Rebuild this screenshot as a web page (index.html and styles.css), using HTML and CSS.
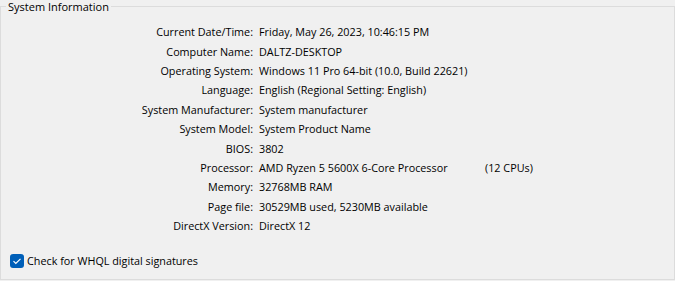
FILE: index.html
```html
<!DOCTYPE html>
<html lang="en">
<head>
    <meta charset="UTF-8">
    <title>System Information</title>
    <link rel="stylesheet" href="styles.css">
</head>
<body>

    <fieldset class="group">
        <legend>System Information</legend>
        <div class="info">
            <div class="row"><span class="label">Current Date/Time:</span><span class="value">Friday, May 26, 2023, 10:46:15 PM</span></div>
            <div class="row"><span class="label">Computer Name:</span><span class="value">DALTZ-DESKTOP</span></div>
            <div class="row"><span class="label">Operating System:</span><span class="value">Windows 11 Pro 64-bit (10.0, Build 22621)</span></div>
            <div class="row"><span class="label">Language:</span><span class="value">English (Regional Setting: English)</span></div>
            <div class="row"><span class="label">System Manufacturer:</span><span class="value">System manufacturer</span></div>
            <div class="row"><span class="label">System Model:</span><span class="value">System Product Name</span></div>
            <div class="row"><span class="label">BIOS:</span><span class="value">3802</span></div>
            <div class="row"><span class="label">Processor:</span><span class="value"><span class="cpu">AMD Ryzen 5 5600X 6-Core Processor</span><span>(12 CPUs)</span></span></div>
            <div class="row"><span class="label">Memory:</span><span class="value">32768MB RAM</span></div>
            <div class="row"><span class="label">Page file:</span><span class="value">30529MB used, 5230MB available</span></div>
            <div class="row"><span class="label">DirectX Version:</span><span class="value">DirectX 12</span></div>
        </div>

        <label class="check">
            <span class="box">
                <svg viewBox="0 0 14 14"><path d="M3.5 7.2l2.3 2.3 4.7-4.7" /></svg>
            </span>
            Check for WHQL digital signatures
        </label>
    </fieldset>

</body>
</html>
```

FILE: styles.css
```css
body {
    margin: 0;
    background-color: #f0f0f0;
    font-family: "Open Sans", "Noto Sans", sans-serif;
    font-size: 10.8px;
    color: #000;
}
.group {
    margin: 0;
    padding: 0;
    border: 1px solid #dcdcdc;
    height: 280px;
    box-sizing: border-box;
    display: flex;
    flex-direction: column;
}
legend {
    margin-left: 5px;
    padding: 0 2px;
    line-height: 13px;
    font-size: 11px;
}
.info {
    margin-top: 9px;
    display: flex;
    flex-direction: column;
}
.row {
    display: flex;
    height: 19.4px;
    align-items: center;
}
.label {
    width: 252px;
    text-align: right;
    flex-shrink: 0;
}
.value {
    margin-left: 6px;
    display: flex;
}
.cpu {
    width: 226px;
}
.check {
    margin-top: auto;
    margin-bottom: 11px;
    margin-left: 9px;
    display: flex;
    align-items: center;
    gap: 3px;
}
.box {
    width: 14px;
    height: 14px;
    border-radius: 3px;
    background-color: #005fb8;
    display: flex;
}
.box svg {
    width: 14px;
    height: 14px;
    fill: none;
    stroke: white;
    stroke-width: 1.2;
}
```
